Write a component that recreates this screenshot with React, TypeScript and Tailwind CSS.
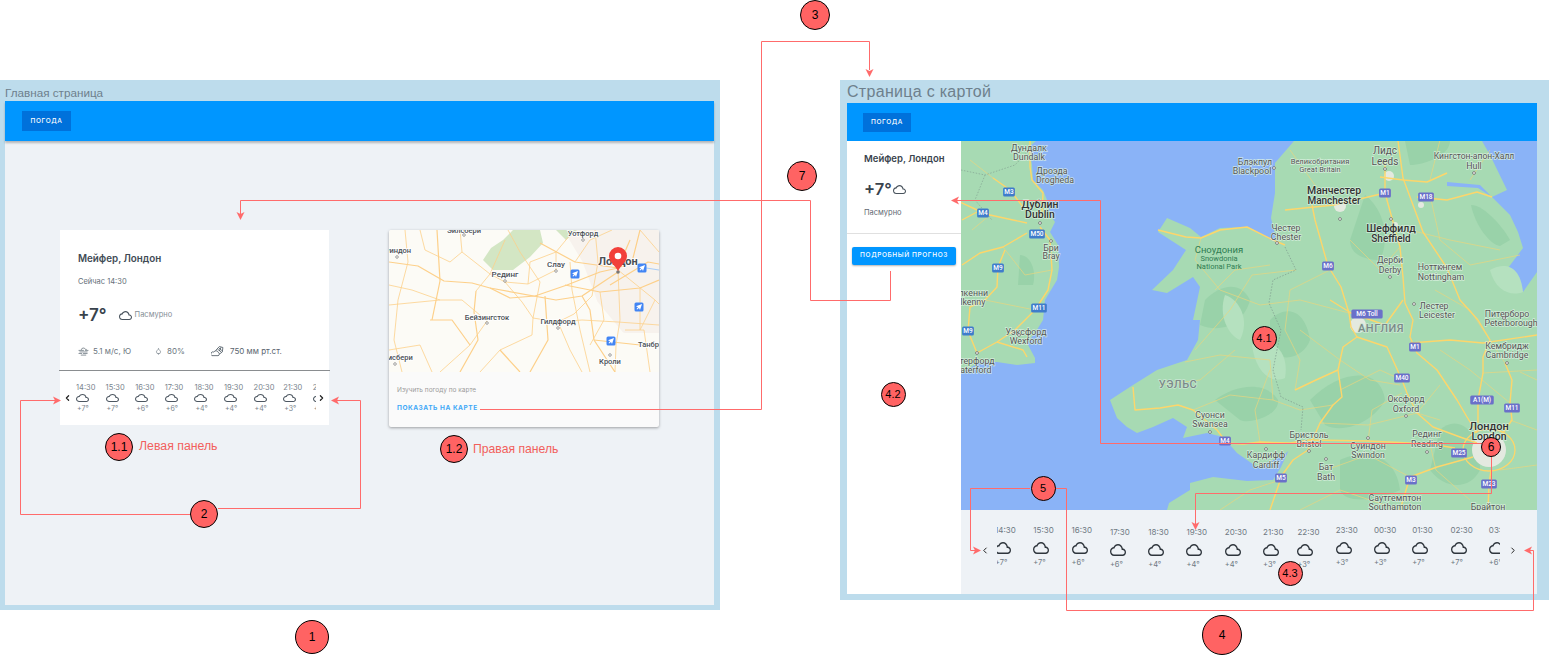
import React from 'react';
import { ChevronLeft, ChevronRight, Droplet } from 'lucide-react';

const RED = '#ff6b6b';

const leftHours = [
  ['14:30', '+7°'], ['15:30', '+7°'], ['16:30', '+6°'], ['17:30', '+6°'], ['18:30', '+4°'],
  ['19:30', '+4°'], ['20:30', '+4°'], ['21:30', '+3°'], ['22:30', '+3°'],
];

const rightHours = [
  ['14:30', '+7°'], ['15:30', '+7°'], ['16:30', '+6°'], ['17:30', '+6°'], ['18:30', '+4°'],
  ['19:30', '+4°'], ['20:30', '+4°'], ['21:30', '+3°'], ['22:30', '+3°'], ['23:30', '+3°'],
  ['00:30', '+3°'], ['01:30', '+7°'], ['02:30', '+7°'], ['03:30', '+6°'],
];

// Outline cloud used all over the weather widgets
const CloudIcon: React.FC<{ className?: string }> = ({ className }) => (
  <svg viewBox="0 4 24 16" preserveAspectRatio="none" className={className} fill="currentColor">
    <path d="M19.35 10.04C18.67 6.59 15.64 4 12 4 9.11 4 6.6 5.64 5.35 8.04 2.34 8.36 0 10.91 0 14c0 3.31 2.69 6 6 6h13c2.76 0 5-2.24 5-5 0-2.64-2.05-4.78-4.65-4.96zM19 18H6c-2.21 0-4-1.79-4-4s1.79-4 4-4h.71C7.37 7.69 9.48 6 12 6c3.04 0 5.5 2.46 5.5 5.5v.5H19c1.66 0 3 1.34 3 3s-1.34 3-3 3z" />
  </svg>
);

const WindIcon = () => (
  <svg viewBox="0 0 12 10" className="w-[11px] h-[9px] text-[#5f6b75]" fill="none" stroke="currentColor" strokeWidth="0.8">
    <path d="M3.5 3.2a2.4 2.4 0 0 1 4.6-.6 1.4 1.4 0 0 1 1.6.6" />
    <path d="M0.5 3.8h6M7.5 3.8h4M1.5 5.5h9M0.5 7.2h4M5.5 7.2h5M3 9h6" />
  </svg>
);

const PressureIcon = () => (
  <svg viewBox="0 0 14 12" className="w-[13px] h-[12px] text-[#4d5963]" fill="none" stroke="currentColor" strokeWidth="0.9">
    <path d="M1 11h6.5a1.8 1.8 0 0 0 .3-3.5A2.6 2.6 0 0 0 3 7.2 2 2 0 0 0 1 11z" />
    <path d="M5 5.5 9 1.2l3.8 1L12.2 7 9.5 9" />
    <path d="M7 4 11 7M8.5 2.7l3.2 2.8M10.8 2 9 6" />
  </svg>
);

const AppBar: React.FC<{ className: string; buttonClass: string }> = ({ className, buttonClass }) => (
  <header className={`flex items-center shrink-0 bg-[#0096ff] ${className}`}>
    <div className={`flex items-center justify-center pt-px bg-[#0071db] text-white font-medium text-[6.5px] tracking-[0.6px] ${buttonClass}`}>
      ПОГОДА
    </div>
  </header>
);

const HomeWeatherCard = () => (
  <section className="w-[269px] h-[195px] bg-white flex flex-col shrink-0">
    <div className="h-[140px] px-[18px] pt-[22px] flex flex-col">
      <h2 className="text-[9.8px] leading-[14px] font-semibold text-[#414b55]">Мейфер, Лондон</h2>
      <p className="mt-[11px] text-[7.5px] leading-[10px] text-[#65707a]">Сейчас 14:30</p>
      <div className="mt-[18px] flex items-center h-[20px]">
        <span className="text-[17px] leading-[20px] font-semibold text-[#38424c]">+7°</span>
        <CloudIcon className="ml-[12px] w-[13px] h-[9px] text-[#49535d]" />
        <span className="ml-[3px] text-[7.5px] text-[#858e96]">Пасмурно</span>
      </div>
      <div className="mt-[20px] flex items-center h-[12px] text-[8px] text-[#6b7680]">
        <WindIcon />
        <span className="ml-[4px] w-[62px]">5.1 м/с, Ю</span>
        <Droplet className="w-[7px] h-[8px] text-[#5f6b75]" strokeWidth={2} />
        <span className="ml-[5px] w-[44px]">80%</span>
        <PressureIcon />
        <span className="ml-[6px] text-[#59646e]">750 мм рт.ст.</span>
      </div>
    </div>
    <div className="h-px bg-[#8a8d90] -mx-px" />
    <div className="flex items-center flex-1 pl-[3px]">
      <ChevronLeft className="w-[9px] h-[10px] text-[#222] shrink-0" strokeWidth={3.2} />
      <div className="ml-[4px] w-[240px] flex overflow-hidden">
        {leftHours.map(([time, temp]) => (
          <div key={time} className="w-[29.6px] shrink-0 flex flex-col items-start text-[#7a848d]">
            <span className="text-[7.5px] leading-[10px]">{time}</span>
            <CloudIcon className="my-[1.5px] w-[13px] h-[8px] text-[#4d5761]" />
            <span className="ml-px text-[7px] leading-[10px]">{temp}</span>
          </div>
        ))}
      </div>
      <ChevronRight className="ml-px w-[9px] h-[10px] text-[#222] shrink-0" strokeWidth={3.2} />
    </div>
  </section>
);

const Plane: React.FC<{ x: number; y: number }> = ({ x, y }) => (
  <g transform={`translate(${x} ${y})`}>
    <rect x="-4.5" y="-4.5" width="9" height="9" rx="1.5" fill="#4285f4" />
    <path d="M3 -3 L-3 -0.8 L-1 0.2 L-2.5 2 L-1.8 2.5 L0 1 L1 3 Z" fill="#fff" />
  </g>
);

const smallRoads = [
  'M389 262 L418 266 L444 281 L472 283 L490 288 L510 298 L535 296 L567 285 L600 272 L618 268',
  'M405 230 L408 262 L398 300 L394 340 L402 372',
  'M460 230 L462 252 L490 274 L505 282 L528 284 L556 270 L556 252 L570 235',
  'M476 291 L474 312 L478 340 L460 372',
  'M462 300 L487 321 L470 345 L440 372',
  'M505 282 L522 302 L533 318 L558 322 L582 320 L618 322 L659 325',
  'M490 288 L556 300 L582 296 L618 272',
  'M533 318 L532 335 L500 350 L480 372',
  'M558 322 L570 350 L582 372',
  'M582 296 L590 310 L594 340 L615 372',
  'M618 270 L620 320 L616 345 L615 372',
  'M618 270 L655 300 L659 304',
  'M640 230 L632 262 L618 268 L575 262 L540 243',
  'M595 230 L598 262 L592 296 L574 314 L558 322',
  'M625 330 L644 330 L650 372',
  'M565 285 L600 292 L640 288 L659 280',
  'M508 230 L520 252 L540 282 L533 318',
  'M389 305 L440 300 L462 300',
  'M430 320 L452 320 L470 345',
  'M389 350 L420 345 L432 372',
  'M570 262 L572 290 L580 330 L590 372',
  'M610 285 L648 262 L659 264',
  'M640 230 L659 252',
  'M420 230 L425 250 L450 262 L462 252',
  'M437 230 L440 281 L432 320',
  'M505 240 L490 274 L476 291',
  'M528 284 L530 262 L556 252',
  'M545 296 L548 340 L530 372',
  'M600 292 L604 320 L590 345',
  'M640 288 L640 330 M655 300 L640 330',
  'M500 350 L520 372 M594 340 L640 345',
  'M389 285 L412 290 L440 300',
  'M575 262 L590 240 L612 230',
  'M618 268 L630 240',
];

const SmallLabel: React.FC<{ x: number; y: number; size?: number; bold?: boolean; children: string }> = ({ x, y, size = 7.5, bold, children }) => (
  <text x={x} y={y} fontSize={size} fontWeight={bold ? 700 : 500} textAnchor="middle" fill="#4a4f55" stroke="#fff" strokeWidth="1.5" paintOrder="stroke">
    {children}
  </text>
);

const SmallMap = () => (
  <svg viewBox="389 230 270 142" className="w-[270px] h-[142px] block" fontFamily="Roboto, sans-serif">
    <rect x="389" y="230" width="270" height="142" fill="#fcfbf6" />
    <path d="M567 230H659V330L625 330 600 300 585 260Z" fill="#f7f2ed" stroke="#f7f2ed" strokeWidth="6" strokeLinejoin="round" />
    <path d="M483 260 491 248 503 240 513 230H540L543 243 530 257 513 270 493 270Z" fill="#d3e6c4" />
    <path d="M556 230 566 240 577 230Z" fill="#d3e6c4" />
    {smallRoads.map((d, i) => (
      <path key={i} d={d} fill="none" stroke="#fdd08a" strokeWidth={i % 3 === 0 ? 1.2 : 0.8} strokeLinejoin="round" />
    ))}
    <path d="M640 267 659 270" stroke="#a9cdf5" strokeWidth="1.2" fill="none" />
    <SmallLabel x={583} y={236}>Уотфорд</SmallLabel>
    <SmallLabel x={396} y={253}>Суиндон</SmallLabel>
    <SmallLabel x={464} y={233}>Эйлсбери</SmallLabel>
    <SmallLabel x={505} y={277} size={8}>Рединг</SmallLabel>
    <SmallLabel x={556} y={267} size={8}>Слау</SmallLabel>
    <SmallLabel x={618} y={265} size={11} bold>Лондон</SmallLabel>
    <SmallLabel x={487} y={320}>Бейзингсток</SmallLabel>
    <SmallLabel x={558} y={324}>Гилдфорд</SmallLabel>
    <SmallLabel x={610} y={364}>Кроли</SmallLabel>
    <SmallLabel x={656} y={347}>Танбридж</SmallLabel>
    <SmallLabel x={395} y={360}>Эймсбери</SmallLabel>
    {[[464, 235], [397, 257], [583, 240], [556, 271], [505, 281], [487, 323], [558, 328], [610, 355], [395, 364]].map(([cx, cy]) => (
      <circle key={`${cx}-${cy}`} cx={cx} cy={cy} r="1.3" fill="#fff" stroke="#666" strokeWidth="0.6" />
    ))}
    <Plane x={575} y={274} />
    <Plane x={642} y={268} />
    <Plane x={639} y={307} />
    <Plane x={611} y={341} />
    <circle cx="618" cy="272" r="1.8" fill="#777" />
    <path d="M618 271 C615 265 609 262 609 256 A9 9 0 0 1 627 256 C627 262 621 265 618 271Z" fill="#f2403a" />
    <circle cx="618" cy="256" r="3.3" fill="#fff" />
  </svg>
);

const MapCard = () => (
  <section className="w-[270px] h-[197px] bg-[#fafafa] rounded-[2px] overflow-hidden shrink-0 shadow-[0_1px_3px_rgba(0,0,0,0.35)]">
    <SmallMap />
    <div className="pl-[8px] pt-[13px]">
      <p className="text-[6.5px] leading-[10px] text-[#9b9b9b]">Изучить погоду по карте</p>
      <p className="mt-[8px] text-[6.5px] leading-[10px] font-bold tracking-[0.55px] text-[#3ea8f7]">ПОКАЗАТЬ НА КАРТЕ</p>
    </div>
  </section>
);

const majorRoads = [
  'M1030 141 L1030 167 L1032 180 L1043 193 L1042 215',
  'M960 202 L977 210 L990 215 L1013 220 L1027 223',
  'M962 220 L977 212',
  'M993 178 L1010 190 L1023 207',
  'M962 265 L980 253 L1003 247 L1027 233',
  'M1005 250 L998 267 L997 287 L985 300 L970 307 L968 331 L977 353',
  'M1040 227 L1050 240 L1052 270 L1048 290 L1035 310 L1022 323 L1015 330 L997 342 L977 353',
  'M997 342 L1023 350 L1027 357',
  'M1158 230 L1186 237 L1201 238 L1220 230 L1247 227 L1273 240 L1285 245',
  'M1133 387 L1135 410 L1160 408 L1178 405 L1193 410 L1217 430 L1227 443 L1243 444 L1260 442 L1290 443 L1310 440 L1368 441 L1430 444 L1455 448',
  'M1280 478 L1293 460 L1308 450 L1320 423 L1333 405 L1342 397 L1338 370 L1343 347 L1357 337 L1351 327 L1349 313 L1341 287 L1328 266 L1315 220 L1312 205',
  'M1357 337 L1387 347 L1402 380 L1407 393 L1417 413 L1433 427 L1460 437 L1477 443',
  'M1385 160 L1385 193 L1400 247 L1403 277 L1405 303 L1413 320 L1410 337 L1417 353 L1437 370 L1457 400 L1467 417 L1477 433',
  'M1478 320 L1490 340 L1483 357 L1483 373 L1478 400 L1478 423',
  'M1505 363 L1512 380 L1510 403 L1512 420 L1503 433',
  'M1410 343 L1450 340 L1483 343 L1537 335',
  'M1473 457 L1437 467 L1410 477 L1400 510',
  'M1285 210 L1334 205 L1385 193',
  'M1380 177 L1403 180 L1427 182 L1447 173',
  'M1417 197 L1447 200 L1477 192 L1492 197',
  'M1398 141 L1403 178 L1413 205 L1423 232 L1447 268 L1460 300 L1478 320',
  'M1295 390 L1316 380 L1338 370',
  'M1491 470 L1489 484 L1488 510',
  'M1270 510 L1281 478',
  'M1330 300 L1351 313 L1385 325 L1403 300',
];

const minorRoads = [
  'M1201 238 L1195 260 L1220 290 L1260 305 L1300 300 L1349 313',
  'M1195 350 L1230 310 L1252 275 L1296 270',
  'M1185 362 L1220 355 L1270 360 L1273 400 L1300 410 L1333 405',
  'M1193 410 L1230 395 L1273 400',
  'M1260 442 L1255 410 L1270 370',
  'M1300 330 L1340 360 L1370 380 L1400 385',
  'M1368 441 L1372 410 L1402 393',
  'M1320 423 L1368 425 L1417 413',
  'M1326 470 L1368 455 L1410 477',
  'M1400 510 L1340 490 L1300 510',
  'M1220 510 L1250 490 L1280 480',
  'M1435 290 L1470 310 L1505 363',
  'M1440 350 L1470 370 L1510 403',
  'M1410 230 L1450 240 L1500 250',
  'M1430 195 L1440 240 L1470 265 L1520 255',
  'M1290 150 L1315 185 L1334 205',
  'M1440 140 L1430 180 M1470 180 L1490 150',
  'M1350 240 L1380 270 L1400 247',
  'M1340 390 L1380 370 L1402 380',
  'M1510 420 L1537 430',
  'M1430 444 L1436 470 L1470 500',
  'M1500 470 L1537 465',
  'M970 160 L993 178 M972 230 L990 215',
  'M1003 247 L1025 275 L1052 270',
  'M985 300 L1010 305 L1035 310',
  'M1215 290 L1235 270 L1270 265',
  'M1160 385 L1200 380 L1235 350',
  'M1330 270 L1290 290 L1285 330 L1300 360 L1295 390',
  'M1440 420 L1417 413 L1440 385',
  'M1520 372 L1537 380 M1483 373 L1537 370',
];

const darkPatches = [
  'M1205 300 C1220 285 1240 280 1250 300 C1245 320 1225 335 1200 325Z',
  'M1270 320 C1285 305 1305 308 1310 340 C1305 355 1285 365 1270 350Z',
  'M1215 400 C1235 385 1265 380 1278 400 C1280 415 1250 425 1240 420Z',
  'M1365 195 C1385 210 1390 240 1380 260 C1365 260 1350 255 1350 240Z',
  'M1310 400 C1340 370 1380 365 1385 400 C1375 420 1345 435 1325 425Z',
  'M1440 430 C1455 415 1480 425 1480 470 C1470 490 1445 490 1430 470Z',
  'M1340 460 C1360 450 1395 450 1400 490 C1380 500 1345 505 1340 490Z',
  'M1471 205 C1485 205 1505 230 1510 240 L1500 246 C1490 245 1475 225 1471 205Z',
  'M1020 255 C1030 255 1037 270 1033 285 L1018 285Z',
  'M1405 141 L1450 141 C1450 155 1425 165 1410 165Z',
];

const lightPatches = [
  'M1225 295 C1240 300 1250 320 1240 340 C1228 335 1218 315 1225 295Z',
  'M1252 345 C1270 335 1290 350 1285 378 C1270 385 1255 370 1252 345Z',
  'M1490 270 C1505 262 1520 265 1523 292 C1510 297 1495 290 1490 270Z',
];

const cities = [
  [1340, 206, 6], [1358, 325, 8], [1389, 176, 5], [1489, 450, 17], [1421, 205, 3], [1395, 225, 3],
];

type Label = [number, number, string, number?, number?, string?];
const mapLabels: Label[] = [
  [1029, 151, 'Дундалк'], [1029, 160, 'Dundalk'], [1052, 174, 'Дроэда'], [1055, 183, 'Drogheda'],
  [1040, 208, 'Дублин', 10.5, 500, '#333'], [1040, 218, 'Dublin', 10.5, 500, '#333'],
  [1051, 251, 'Бри'], [1051, 259, 'Bray'], [968, 296, 'Килкенни'], [969, 305, 'Kilkenny'],
  [1026, 335, 'Уэксфорд'], [1026, 344, 'Wexford'], [972, 364, 'Уотерфорд'], [972, 373, 'Waterford'],
  [1255, 165, 'Блэкпул'], [1252, 174, 'Blackpool'], [1320, 164, 'Великобритания', 7.5], [1320, 172, 'Great Britain', 7.5],
  [1385, 154, 'Лидс', 10], [1385, 165, 'Leeds', 10], [1474, 159, 'Кингстон-апон-Халл', 8.5], [1474, 169, 'Hull'],
  [1334, 194, 'Манчестер', 10.5, 500, '#333'], [1334, 204, 'Manchester', 10, 500, '#333'],
  [1391, 232, 'Шеффилд', 10.5, 500, '#333'], [1391, 242, 'Sheffield', 10, 500, '#333'],
  [1286, 231, 'Честер'], [1286, 240, 'Chester'], [1390, 263, 'Дерби'], [1390, 273, 'Derby'],
  [1440, 270, 'Ноттингем'], [1441, 280, 'Nottingham'], [1434, 309, 'Лестер'], [1437, 318, 'Leicester'],
  [1507, 317, 'Питерборо'], [1511, 326, 'Peterborough'], [1507, 349, 'Кембридж'], [1507, 358, 'Cambridge'],
  [1406, 402, 'Оксфорд'], [1406, 412, 'Oxford'], [1210, 418, 'Суонси'], [1210, 427, 'Swansea'],
  [1309, 438, 'Бристоль'], [1309, 447, 'Bristol'], [1368, 449, 'Суиндон'], [1368, 458, 'Swindon'],
  [1427, 437, 'Рединг'], [1427, 447, 'Reading'], [1489, 430, 'Лондон', 11, 500, '#333'], [1489, 440, 'London', 10.5, 500, '#333'],
  [1266, 458, 'Кардифф'], [1266, 468, 'Cardiff'], [1326, 470, 'Бат'], [1326, 480, 'Bath'],
  [1395, 501, 'Саутгемптон'], [1395, 510, 'Southampton'], [1488, 510, 'Брайтон'],
];

const shields: [number, number, string, string][] = [
  [1009, 192, 'M3', '#3f7ccb'], [983, 213, 'M4', '#3f7ccb'], [1037, 234, 'M50', '#3f7ccb'], [998, 268, 'M9', '#3f7ccb'],
  [1039, 308, 'M11', '#3f7ccb'], [968, 331, 'M9', '#3f7ccb'], [1328, 266, 'M6', '#6a70c9'], [1385, 193, 'M1', '#6a70c9'],
  [1426, 197, 'M18', '#6a70c9'], [1367, 314, 'M6 Toll', '#6a70c9'], [1415, 347, 'M1', '#6a70c9'], [1402, 378, 'M40', '#6a70c9'],
  [1482, 400, 'A1(M)', '#6a70c9'], [1512, 408, 'M11', '#6a70c9'], [1459, 453, 'M25', '#6a70c9'], [1225, 441, 'M4', '#6a70c9'],
  [1281, 478, 'M5', '#6a70c9'], [1411, 480, 'M3', '#6a70c9'], [1489, 484, 'M23', '#6a70c9'],
];

const LandMap = () => (
  <svg viewBox="961 141 576 369" className="w-[576px] h-[369px] block" fontFamily="Roboto, sans-serif">
    <rect x="961" y="141" width="576" height="369" fill="#8ab3f7" />
    {/* Ireland */}
    <path d="M961 141 L1036 141 L1029 147 L1032 165 L1033 180 L1043 190 L1047 200 L1050 215 L1055 222 L1050 232 L1058 245 L1059 267 L1057 280 L1045 300 L1043 320 L1035 333 L1027 343 L1035 358 L1035 363 L1017 365 L997 362 L980 362 L961 373Z" fill="#a7dab3" />
    {/* Great Britain */}
    <path d="M1294 141 L1482 141 L1490 155 L1507 190 L1492 197 L1510 215 L1518 232 L1523 248 L1505 272 L1508 282 L1523 292 L1537 272 L1537 510 L1167 510 L1169 503 L1190 490 L1190 483 L1213 477 L1247 481 L1273 480 L1281 467 L1292 443 L1322 413 L1304 436 L1284 455 L1257 467 L1237 453 L1223 437 L1207 433 L1183 438 L1187 427 L1173 418 L1153 427 L1137 433 L1127 427 L1117 418 L1110 400 L1133 385 L1157 370 L1187 360 L1198 340 L1200 320 L1193 320 L1200 287 L1193 277 L1167 293 L1152 290 L1173 270 L1186 250 L1158 232 L1167 218 L1190 228 L1201 237 L1220 228 L1247 227 L1277 243 L1271 218 L1275 193 L1275 163 Z" fill="#a7dab3" />
    <path d="M1447 182 L1480 185 L1492 197 L1478 188 L1447 186Z" fill="#8ab3f7" />
    {darkPatches.map((d, i) => <path key={i} d={d} fill="#99d2a9" />)}
    {lightPatches.map((d, i) => <path key={i} d={d} fill="#b5e1bf" />)}
    {cities.map(([cx, cy, r]) => <circle key={cx} cx={cx} cy={cy} r={r} fill="#e4e9e0" />)}
    {minorRoads.map((d, i) => <path key={i} d={d} fill="none" stroke="#e8d57e" strokeWidth="0.7" strokeLinejoin="round" />)}
    {majorRoads.map((d, i) => <path key={i} d={d} fill="none" stroke="#fdd66b" strokeWidth="1.4" strokeLinejoin="round" />)}
    <ellipse cx="1489" cy="450" rx="26" ry="21" fill="none" stroke="#fdd66b" strokeWidth="1.3" />
    <path d="M1285 247 L1296 270 L1273 280 L1269 303 L1281 330 L1273 370 L1281 397 L1303 407 L1301 430" fill="none" stroke="#7d9a8d" strokeWidth="0.7" strokeDasharray="1.5 1.5" />
    <path d="M961 170 L985 175 L1015 165 L1033 146 M985 175 L975 200 L992 220" fill="none" stroke="#7d9a8d" strokeWidth="0.6" strokeDasharray="1.5 1.5" />
    <text x="1219" y="253" fontSize="9.5" textAnchor="middle" fill="#2f7d52">Сноудония</text>
    <text x="1219" y="261" fontSize="7.5" textAnchor="middle" fill="#2f7d52">Snowdonia</text>
    <text x="1219" y="269" fontSize="7.5" textAnchor="middle" fill="#2f7d52">National Park</text>
    <text x="1381" y="332" fontSize="11" fontWeight="500" letterSpacing="0.5" textAnchor="middle" fill="#7b8a88" stroke="#c9e6d2" strokeWidth="1.5" paintOrder="stroke">АНГЛИЯ</text>
    <text x="1178" y="388" fontSize="11" fontWeight="500" letterSpacing="0.5" textAnchor="middle" fill="#7b8a88" stroke="#c9e6d2" strokeWidth="1.5" paintOrder="stroke">УЭЛЬС</text>
    {mapLabels.map(([x, y, text, size = 8.8, weight = 400, color = '#555']) => (
      <text key={text} x={x} y={y} fontSize={size} fontWeight={weight} textAnchor="middle" fill={color} stroke="#dff2e4" strokeWidth="1.4" paintOrder="stroke" strokeOpacity="0.8">
        {text}
      </text>
    ))}
    {[[1040, 223], [1051, 241], [1019, 335], [977, 353], [1277, 243], [1385, 169], [1391, 219], [1340, 219], [1474, 173], [1441, 267], [1390, 277], [1507, 363], [1406, 416], [1210, 432], [1309, 451], [1368, 438], [1427, 452], [1326, 459], [1266, 449], [1414, 304], [1504, 318], [1274, 168]].map(([cx, cy]) => (
      <circle key={`${cx}-${cy}`} cx={cx} cy={cy} r="1.4" fill="#fff" stroke="#555" strokeWidth="0.7" />
    ))}
    {shields.map(([x, y, text, fill]) => {
      const w = text.length * 3.9 + 4;
      return (
        <g key={`${text}-${x}`}>
          <rect x={x - w / 2} y={y - 4.5} width={w} height={9} rx="1.5" fill={fill} />
          <text x={x} y={y + 2.3} fontSize="6.5" fontWeight="500" textAnchor="middle" fill="#fff">{text}</text>
        </g>
      );
    })}
  </svg>
);

const MapPage = () => (
  <div className="flex flex-1 min-h-0">
    <aside className="w-[114px] bg-white shrink-0 flex flex-col">
      <div className="h-[93px] pl-[17px] pt-[11px] border-b border-[#e0e0e0]">
        <h2 className="text-[9.5px] leading-[14px] font-semibold text-[#3a444e]">Мейфер, Лондон</h2>
        <div className="mt-[13px] flex items-center h-[20px]">
          <span className="text-[16.5px] leading-[20px] font-semibold text-[#39434d]">+7°</span>
          <CloudIcon className="ml-px w-[13px] h-[9px] text-[#49535d]" />
        </div>
        <p className="mt-[9px] text-[7.5px] leading-[10px] text-[#5e6872]">Пасмурно</p>
      </div>
      <div className="mt-[13px] mx-[5px] h-[18px] bg-[#0096ff] rounded-[2px] flex items-center justify-center text-white text-[6.5px] font-medium tracking-[0.6px] shadow-[0_1px_2px_rgba(0,0,0,0.3)]">
        ПОДРОБНЫЙ ПРОГНОЗ
      </div>
    </aside>
    <div className="flex flex-col w-[576px]">
      <LandMap />
      <div className="flex-1 bg-[#eef2f6] pt-[16px] pl-[19px] flex self-stretch items-start">
        <ChevronLeft className="mt-[19px] w-[10px] h-[11px] text-[#222] shrink-0" strokeWidth={2.4} />
        <div className="ml-[7px] w-[503px] flex overflow-hidden -mt-px">
          {rightHours.map(([time, temp], i) => (
            <div
              key={time}
              className={`w-[38.3px] shrink-0 flex flex-col items-start text-[#6f7983] ${i === 0 ? '-ml-[2px]' : ''} ${i === 8 ? '-ml-[4px]' : ''} ${i >= 3 && i <= 8 ? 'mt-[2px]' : ''}`}
            >
              <span className="text-[8px] leading-[10px]">{time}</span>
              <CloudIcon className="mt-[7px] w-[16px] h-[12px] text-[#2e353c]" />
              <span className="mt-[4px] text-[7.5px] leading-[10px]">{temp}</span>
            </div>
          ))}
        </div>
        <ChevronRight className="mt-[19px] ml-[8px] w-[10px] h-[11px] text-[#222] shrink-0" strokeWidth={2.4} />
      </div>
    </div>
  </div>
);

// Connector lines between the two frames; arrow heads are drawn on top of the lines
const head = (x: number, y: number, dir: 'up' | 'down' | 'left' | 'right') => {
  const [dx, dy] = { up: [0, 1], down: [0, -1], left: [1, 0], right: [-1, 0] }[dir];
  const [px, py] = [dy, dx];
  return `M${x} ${y} L${x + dx * 8 + px * 4} ${y + dy * 8 + py * 4} L${x + dx * 6} ${y + dy * 6} L${x + dx * 8 - px * 4} ${y + dy * 8 - py * 4}Z`;
};

const connectors = [
  'M480 409.5 H761.5 V41.5 H869.5 V70',
  'M890.5 271 V300.5 H810.5 V200.5 H240.5 V214',
  'M956 200.5 H1100.5 V443.5 H1482',
  'M1491.5 457 V493.5 H1195.5 V524',
  'M1030 488.5 H970.5 V550.5 H975',
  'M1055 488.5 H1066.5 V610.5 H1533.5 V550.5 H1530',
  'M191 514.5 H20.5 V400.5 H55',
  'M218 508.5 H360.5 V400.5 H337',
];

const arrows = [
  head(869.5, 77, 'down'), head(240.5, 220, 'down'), head(951, 200.5, 'left'), head(1195.5, 530, 'down'),
  head(981, 550.5, 'right'), head(1524, 550.5, 'left'), head(61, 400.5, 'right'), head(331, 400.5, 'left'),
];

const Connectors = () => (
  <svg className="absolute inset-0 w-[1550px] h-[656px] pointer-events-none" viewBox="0 0 1550 656" fill="none">
    {connectors.map((d) => <path key={d} d={d} stroke={RED} strokeWidth="1" />)}
    {arrows.map((d) => <path key={d} d={d} fill={RED} />)}
  </svg>
);

const badges: [number, number, number, string, string][] = [
  [815, 15, 30, '3', 'text-[12px]'], [802, 176, 30, '7', 'text-[12px]'], [312, 637, 34, '1', 'text-[12px]'],
  [1222, 635, 40, '4', 'text-[12px]'], [119, 447, 28, '1.1', 'text-[12px]'], [204, 514, 28, '2', 'text-[12px]'],
  [454, 449, 28, '1.2', 'text-[12px]'], [1264, 338, 25, '4.1', 'text-[11px]'], [893, 394, 25, '4.2', 'text-[11px]'],
  [1290, 573, 25, '4.3', 'text-[11px]'], [1043, 488, 25, '5', 'text-[11px]'], [1491, 447, 20, '6', 'text-[12px]'],
];

const App: React.FC = () => (
  <div className="relative w-[1550px] h-[656px] bg-white overflow-hidden font-['Inter',sans-serif]">
    <main className="absolute left-0 top-[80px] w-[720px] h-[530px] bg-[#bddcec] pl-[5px] pr-[6px] pb-[5px] flex flex-col">
      <div className="h-[21px] pt-[6px] text-[11.7px] leading-[14px] text-[#6e808c] font-['Liberation_Sans',sans-serif]">Главная страница</div>
      <AppBar className="h-[40px] pl-[17px] shadow-[0_2px_2px_rgba(0,0,0,0.25)] relative" buttonClass="w-[49px] h-[20px]" />
      <div className="flex-1 bg-[#eef2f6] pl-[55px] pt-[89px] flex items-start gap-[60px]">
        <HomeWeatherCard />
        <MapCard />
      </div>
    </main>

    <main className="absolute left-[840px] top-[80px] w-[709px] h-[520px] bg-[#bddcec] pl-[7px] pr-[12px] pb-[6px] flex flex-col">
      <div className="h-[23px] pt-[3px] text-[16px] leading-[18px] tracking-[0.3px] text-[#6e808c] font-['Liberation_Sans',sans-serif]">Страница с картой</div>
      <AppBar className="h-[38px] pl-[16px]" buttonClass="w-[48px] h-[19px]" />
      <MapPage />
    </main>

    <Connectors />

    {badges.map(([x, y, d, label, size]) => (
      <div
        key={label}
        className={`absolute flex items-center justify-center rounded-full bg-[#ff6363] border border-black text-black font-['Liberation_Sans',sans-serif] ${size}`}
        style={{ left: x - d / 2, top: y - d / 2, width: d, height: d }}
      >
        {label}
      </div>
    ))}
    <span className="absolute left-[139px] top-[439px] text-[12.3px] leading-[14px] text-[#f25f5c] font-['Liberation_Sans',sans-serif]">Левая панель</span>
    <span className="absolute left-[473px] top-[442px] text-[12.2px] leading-[14px] text-[#f25f5c] font-['Liberation_Sans',sans-serif]">Правая панель</span>
  </div>
);

export default App;
